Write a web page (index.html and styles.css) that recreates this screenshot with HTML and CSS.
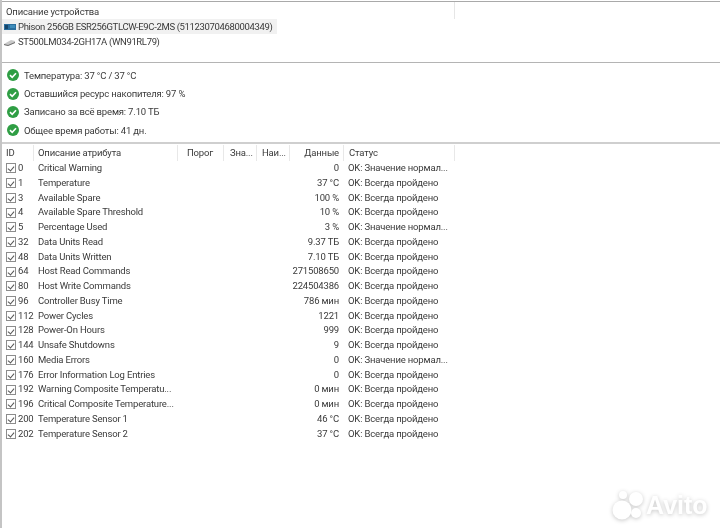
FILE: index.html
```html
<!DOCTYPE html>
<html lang="ru">
<head>
<meta charset="utf-8">
<title>Описание устройства</title>
<link rel="stylesheet" href="styles.css">
</head>
<body>
<main class="app">
  <section class="devices">
    <div class="dev-head"><span class="dev-title">Описание устройства</span></div>
    <div class="dev-row selected">
      <svg class="dev-icon" viewBox="0 0 12 8"><rect y="1" width="12" height="6" fill="#2b6f9e"/><rect x="1" y="2" width="3" height="4" fill="#17466b"/><rect x="6" y="2" width="5" height="3" fill="#3f8dbb"/></svg>
      <span>Phison 256GB ESR256GTLCW-E9C-2MS (511230704680004349)</span>
    </div>
    <div class="dev-row">
      <svg class="dev-icon" viewBox="0 0 12 8"><path d="M0 6 L7 2 L11 3 L11 5 L4 8 L0 7 Z" fill="#c9c9c9"/><path d="M0 6 L4 7 L11 4 L11 5 L4 8 L0 7 Z" fill="#6f6f6f"/></svg>
      <span>ST500LM034-2GH17A (WN91RL79)</span>
    </div>
  </section>

  <section class="summary">
    <div class="sum-row"><svg class="ok" viewBox="0 0 12 12"><circle cx="6" cy="6" r="6" fill="#2f9e44"/><path d="M3 6.2 5.2 8.3 9 4.2" fill="none" stroke="#fff" stroke-width="1.6"/></svg><span>Температура: 37 °C / 37 °C</span></div>
    <div class="sum-row"><svg class="ok" viewBox="0 0 12 12"><circle cx="6" cy="6" r="6" fill="#2f9e44"/><path d="M3 6.2 5.2 8.3 9 4.2" fill="none" stroke="#fff" stroke-width="1.6"/></svg><span>Оставшийся ресурс накопителя: 97 %</span></div>
    <div class="sum-row"><svg class="ok" viewBox="0 0 12 12"><circle cx="6" cy="6" r="6" fill="#2f9e44"/><path d="M3 6.2 5.2 8.3 9 4.2" fill="none" stroke="#fff" stroke-width="1.6"/></svg><span>Записано за всё время: 7.10 ТБ</span></div>
    <div class="sum-row"><svg class="ok" viewBox="0 0 12 12"><circle cx="6" cy="6" r="6" fill="#2f9e44"/><path d="M3 6.2 5.2 8.3 9 4.2" fill="none" stroke="#fff" stroke-width="1.6"/></svg><span>Общее время работы: 41 дн.</span></div>
  </section>

  <section class="table">
    <div class="row head">
      <span class="c-id">ID</span>
      <span class="c-name sep">Описание атрибута</span>
      <span class="c-thr sep">Порог</span>
      <span class="c-val sep">Зна...</span>
      <span class="c-wor sep">Наи...</span>
      <span class="c-data sep">Данные</span>
      <span class="c-stat sep">Статус</span>
    </div>
    <div class="row"><span class="c-id"><i class="cb"></i>0</span><span class="c-name">Critical Warning</span><span class="c-thr"></span><span class="c-val"></span><span class="c-wor"></span><span class="c-data">0</span><span class="c-stat">OK: Значение нормал...</span></div>
    <div class="row"><span class="c-id"><i class="cb"></i>1</span><span class="c-name">Temperature</span><span class="c-thr"></span><span class="c-val"></span><span class="c-wor"></span><span class="c-data">37 °C</span><span class="c-stat">OK: Всегда пройдено</span></div>
    <div class="row"><span class="c-id"><i class="cb"></i>3</span><span class="c-name">Available Spare</span><span class="c-thr"></span><span class="c-val"></span><span class="c-wor"></span><span class="c-data">100 %</span><span class="c-stat">OK: Всегда пройдено</span></div>
    <div class="row"><span class="c-id"><i class="cb"></i>4</span><span class="c-name">Available Spare Threshold</span><span class="c-thr"></span><span class="c-val"></span><span class="c-wor"></span><span class="c-data">10 %</span><span class="c-stat">OK: Всегда пройдено</span></div>
    <div class="row"><span class="c-id"><i class="cb"></i>5</span><span class="c-name">Percentage Used</span><span class="c-thr"></span><span class="c-val"></span><span class="c-wor"></span><span class="c-data">3 %</span><span class="c-stat">OK: Значение нормал...</span></div>
    <div class="row"><span class="c-id"><i class="cb"></i>32</span><span class="c-name">Data Units Read</span><span class="c-thr"></span><span class="c-val"></span><span class="c-wor"></span><span class="c-data">9.37 ТБ</span><span class="c-stat">OK: Всегда пройдено</span></div>
    <div class="row"><span class="c-id"><i class="cb"></i>48</span><span class="c-name">Data Units Written</span><span class="c-thr"></span><span class="c-val"></span><span class="c-wor"></span><span class="c-data">7.10 ТБ</span><span class="c-stat">OK: Всегда пройдено</span></div>
    <div class="row"><span class="c-id"><i class="cb"></i>64</span><span class="c-name">Host Read Commands</span><span class="c-thr"></span><span class="c-val"></span><span class="c-wor"></span><span class="c-data">271508650</span><span class="c-stat">OK: Всегда пройдено</span></div>
    <div class="row"><span class="c-id"><i class="cb"></i>80</span><span class="c-name">Host Write Commands</span><span class="c-thr"></span><span class="c-val"></span><span class="c-wor"></span><span class="c-data">224504386</span><span class="c-stat">OK: Всегда пройдено</span></div>
    <div class="row"><span class="c-id"><i class="cb"></i>96</span><span class="c-name">Controller Busy Time</span><span class="c-thr"></span><span class="c-val"></span><span class="c-wor"></span><span class="c-data">786 мин</span><span class="c-stat">OK: Всегда пройдено</span></div>
    <div class="row"><span class="c-id"><i class="cb"></i>112</span><span class="c-name">Power Cycles</span><span class="c-thr"></span><span class="c-val"></span><span class="c-wor"></span><span class="c-data">1221</span><span class="c-stat">OK: Всегда пройдено</span></div>
    <div class="row"><span class="c-id"><i class="cb"></i>128</span><span class="c-name">Power-On Hours</span><span class="c-thr"></span><span class="c-val"></span><span class="c-wor"></span><span class="c-data">999</span><span class="c-stat">OK: Всегда пройдено</span></div>
    <div class="row"><span class="c-id"><i class="cb"></i>144</span><span class="c-name">Unsafe Shutdowns</span><span class="c-thr"></span><span class="c-val"></span><span class="c-wor"></span><span class="c-data">9</span><span class="c-stat">OK: Всегда пройдено</span></div>
    <div class="row"><span class="c-id"><i class="cb"></i>160</span><span class="c-name">Media Errors</span><span class="c-thr"></span><span class="c-val"></span><span class="c-wor"></span><span class="c-data">0</span><span class="c-stat">OK: Значение нормал...</span></div>
    <div class="row"><span class="c-id"><i class="cb"></i>176</span><span class="c-name">Error Information Log Entries</span><span class="c-thr"></span><span class="c-val"></span><span class="c-wor"></span><span class="c-data">0</span><span class="c-stat">OK: Всегда пройдено</span></div>
    <div class="row"><span class="c-id"><i class="cb"></i>192</span><span class="c-name">Warning Composite Temperatu...</span><span class="c-thr"></span><span class="c-val"></span><span class="c-wor"></span><span class="c-data">0 мин</span><span class="c-stat">OK: Всегда пройдено</span></div>
    <div class="row"><span class="c-id"><i class="cb"></i>196</span><span class="c-name">Critical Composite Temperature...</span><span class="c-thr"></span><span class="c-val"></span><span class="c-wor"></span><span class="c-data">0 мин</span><span class="c-stat">OK: Всегда пройдено</span></div>
    <div class="row"><span class="c-id"><i class="cb"></i>200</span><span class="c-name">Temperature Sensor 1</span><span class="c-thr"></span><span class="c-val"></span><span class="c-wor"></span><span class="c-data">46 °C</span><span class="c-stat">OK: Всегда пройдено</span></div>
    <div class="row"><span class="c-id"><i class="cb"></i>202</span><span class="c-name">Temperature Sensor 2</span><span class="c-thr"></span><span class="c-val"></span><span class="c-wor"></span><span class="c-data">37 °C</span><span class="c-stat">OK: Всегда пройдено</span></div>
  </section>
</main>
<div class="watermark">
  <svg class="wm-dots" viewBox="0 0 32 32"><circle cx="10" cy="21" r="9.5"/><circle cx="24" cy="24" r="5"/><circle cx="11" cy="6" r="4"/><circle cx="24" cy="10" r="7"/></svg>
  <span class="wm-text">Avito</span>
</div>
</body>
</html>
```
FILE: styles.css
```css
* { box-sizing: border-box; }
html, body { margin: 0; padding: 0; background: #fff; }
body {
  width: 720px;
  height: 528px;
  overflow: hidden;
  position: relative;
  font-family: Roboto, "Noto Sans", sans-serif;
  font-size: 9.5px;
  letter-spacing: -0.17px;
  color: #3a3a3a;
}
.app {
  display: flex;
  flex-direction: column;
  height: 528px;
  padding-top: 1px;
  border-left: 2px solid #c4c4c4;
  filter: blur(0.25px);
}
.devices {
  height: 62px;
  border-top: 1px solid #a9a9a9;
  border-bottom: 1px solid #b4b4b4;
  display: flex;
  flex-direction: column;
}
.dev-head {
  height: 17px;
  width: 453px;
  padding: 3px 0 0 4px;
  border-right: 1px solid #e6e6e6;
  line-height: 14px;
}
.dev-row {
  display: flex;
  align-items: center;
  gap: 2px;
  height: 15px;
  width: 275px;
  padding-left: 2px;
  line-height: 15px;
  letter-spacing: -0.35px;
  white-space: nowrap;
}
.dev-row.selected { background: #f1f1f1; }
.dev-icon { width: 12px; height: 8px; flex: none; }
.summary {
  height: 81px;
  padding-top: 3px;
  border-bottom: 2px solid #cfcfcf;
  display: flex;
  flex-direction: column;
}
.sum-row {
  display: flex;
  align-items: center;
  gap: 5px;
  height: 18.4px;
  padding-left: 5px;
}
.ok { width: 12px; height: 12px; flex: none; }
.table { display: flex; flex-direction: column; padding-top: 1px; }
.row {
  display: grid;
  grid-template-columns: 31px 144px 46px 33px 33px 54px 112px;
  height: 14.75px;
  line-height: 14.75px;
  white-space: nowrap;
}
.row > span { padding-left: 5px; }
.head { height: 16px; line-height: 16px; }
.head .sep { border-left: 1px solid #e8e8e8; }
.head .c-name { padding-left: 4px; }
.head .c-thr { padding-left: 9px; }
.head .c-val { padding-left: 6px; }
.row .c-id { display: flex; align-items: center; gap: 2px; padding-left: 4px; }
.row .c-data { text-align: right; padding: 0 4px 0 0; }
.head .c-stat { border-right: 1px solid #e8e8e8; }
.cb {
  display: block;
  width: 10px;
  height: 10px;
  flex: none;
  border: 1px solid #8c8c8c;
  position: relative;
}
.cb::after {
  content: "";
  position: absolute;
  left: 2px;
  top: 1px;
  width: 3px;
  height: 5px;
  border: solid #555;
  border-width: 0 1px 1px 0;
  transform: rotate(40deg);
}
.watermark {
  position: absolute;
  left: 612px;
  top: 489px;
  display: flex;
  align-items: center;
  gap: 2px;
  filter: drop-shadow(0 1px 2px rgba(0,0,0,.22));
}
.wm-dots { width: 32px; height: 32px; fill: #fff; }
.wm-text {
  font-family: "Liberation Sans", sans-serif;
  font-weight: 700;
  font-size: 25px;
  line-height: 32px;
  color: #fff;
  letter-spacing: 0;
}
```
